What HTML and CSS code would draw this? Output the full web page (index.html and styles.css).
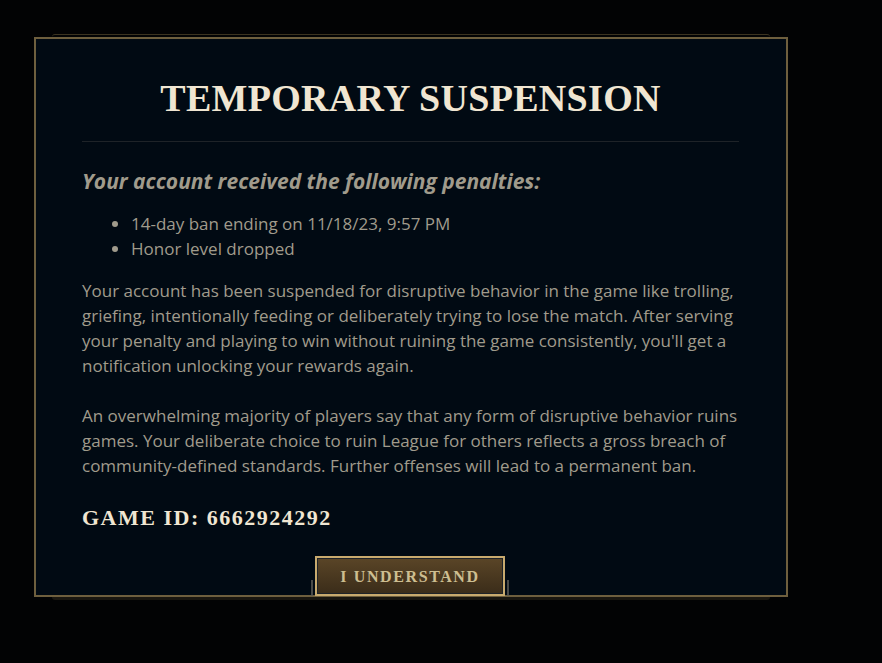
FILE: index.html
```html
<!DOCTYPE html>
<html>
<head>
<meta charset="utf-8">
<link rel="stylesheet" href="styles.css">
</head>
<body>
<div class="stage">
  <div class="modal">
    <div class="content">
      <h1 class="title">TEMPORARY SUSPENSION</h1>
      <hr class="sep">
      <h2 class="sub">Your account received the following penalties:</h2>
      <ul class="list">
        <li>14-day ban ending on 11/18/23, 9:57 PM</li>
        <li>Honor level dropped</li>
      </ul>
      <p class="para">Your account has been suspended for disruptive behavior in the game like trolling, griefing, intentionally feeding or deliberately trying to lose the match. After serving your penalty and playing to win without ruining the game consistently, you'll get a notification unlocking your rewards again.</p>
      <p class="para">An overwhelming majority of players say that any form of disruptive behavior ruins games. Your deliberate choice to ruin League for others reflects a gross breach of community-defined standards. Further offenses will lead to a permanent ban.</p>
      <div class="gameid">GAME ID: 6662924292</div>
    </div>
    <div class="actions">
      <span class="tick"></span>
      <button class="btn">I UNDERSTAND</button>
      <span class="tick"></span>
    </div>
  </div>
</div>
</body>
</html>
```
FILE: styles.css
```css
html, body {
  margin: 0;
  padding: 0;
  background: #020304;
  width: 882px;
  height: 663px;
  overflow: hidden;
}
.stage {
  padding: 37px 0 0 34px;
}
.modal {
  position: relative;
  width: 750px;
  height: 556px;
  background: #010a13;
  border: 2px solid #6e5f3e;
  display: flex;
  flex-direction: column;
}
.modal::before {
  content: "";
  position: absolute;
  top: -5px;
  left: 16px;
  right: 16px;
  height: 3px;
  border-top: 1px solid #3b3320;
  border-radius: 3px 3px 0 0;
}
.modal::after {
  content: "";
  position: absolute;
  bottom: -5px;
  left: 16px;
  right: 16px;
  height: 3px;
  background: #1a1710;
  border-radius: 0 0 3px 3px;
}
.content {
  padding: 0 47px 0 46px;
  flex: 1;
}
.title {
  margin: 37px 0 0;
  text-align: center;
  font-family: "Liberation Serif", "DejaVu Serif", serif;
  font-weight: bold;
  font-size: 38px;
  letter-spacing: 0.3px;
  line-height: 44px;
  color: #f0e6d2;
}
.sep {
  margin: 21px 0 0;
  border: 0;
  height: 1px;
  background: #1e2328;
}
.sub {
  margin: 25px 0 0;
  font-family: "Open Sans", "DejaVu Sans", sans-serif;
  font-style: italic;
  font-weight: bold;
  font-size: 21px;
  line-height: 28px;
  color: #a09b8c;
}
.list {
  margin: 16px 0 0;
  padding-left: 49px;
  font-family: "Open Sans", sans-serif;
  font-size: 17px;
  line-height: 25px;
  color: #a09b8c;
}
.para {
  margin: 17px 0 0;
  font-family: "Open Sans", sans-serif;
  font-size: 17px;
  line-height: 25px;
  color: #a09b8c;
}
.para + .para {
  margin-top: 25px;
}
.gameid {
  margin-top: 27px;
  font-family: "Liberation Serif", "DejaVu Serif", serif;
  font-weight: bold;
  font-size: 22px;
  letter-spacing: 1.5px;
  color: #f0e6d2;
}
.actions {
  display: flex;
  justify-content: center;
  align-items: flex-end;
  gap: 2px;
  margin-bottom: -1px;
  padding-right: 2px;
  position: relative;
  z-index: 1;
}
.tick {
  width: 2px;
  height: 16px;
  background: #5b5a56;
  opacity: 0.8;
}
.btn {
  width: 190px;
  height: 40px;
  border: 2px solid #c8aa6e;
  box-shadow: inset 0 0 0 1px #1e2328;
  background: linear-gradient(#5a4527, #3a2c19);
  color: #cdbe91;
  font-family: "Liberation Serif", "DejaVu Serif", serif;
  font-weight: bold;
  font-size: 16px;
  letter-spacing: 1.6px;
  padding: 2px 0 0;
  cursor: pointer;
}
```
